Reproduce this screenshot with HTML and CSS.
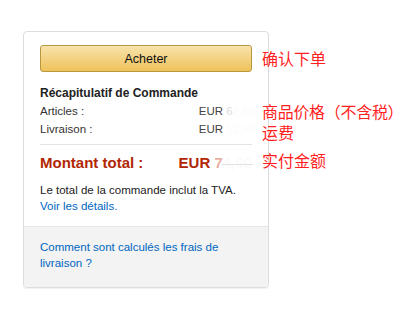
FILE: index.html
```html
<!DOCTYPE html>
<html lang="fr">
<head>
  <meta charset="UTF-8" />
  <meta name="viewport" content="width=device-width, initial-scale=1.0"/>
  <title>Récapitulatif de Commande</title>
  <link rel="stylesheet" href="styles.css">
</head>
<body>
  <div class="page">
    <div class="card">
      <div class="card-body">
        <button class="buy-btn">Acheter</button>
        <h2 class="summary-title">Récapitulatif de Commande</h2>
        <div class="row"><span>Articles :</span><span class="price">EUR <span class="fade">6</span><span class="gone">2,60</span></span></div>
        <div class="row"><span>Livraison :</span><span class="price">EUR <span class="gone">12,60</span></span></div>
        <div class="total-row"><span>Montant total :</span><span class="total-price">EUR <span class="fade-red">7</span><span class="gone">4,60</span></span></div>
        <p class="vat">Le total de la commande inclut la TVA.<br><a href="#">Voir les détails.</a></p>
      </div>
      <div class="card-foot">
        <a href="#">Comment sont calculés les frais de<br>livraison ?</a>
      </div>
    </div>

    <div class="note note-buy">确认下单</div>
    <div class="note note-items">商品价格（不含税）</div>
    <div class="note note-ship">运费</div>
    <div class="note note-total">实付金额</div>
    <div class="arrow"></div>
  </div>
</body>
</html>
```

FILE: styles.css
```css
body { margin: 0; font-family: "Liberation Sans", Arial, sans-serif; background: #fff; color: #111; }
.page { position: relative; width: 403px; height: 317px; padding: 31px 0 0 23px; box-sizing: border-box; }

.card { width: 246px; border: 1px solid #ddd; border-radius: 4px; box-sizing: border-box; overflow: hidden; box-shadow: 0 1px 1px rgba(0,0,0,0.06); }
.card-body { padding: 13px 16px 12px; }

.buy-btn { display: block; width: 100%; height: 27px; border: 1px solid #b9993e; border-radius: 3px; background: linear-gradient(#f8e3ad, #eec25a); font-family: inherit; font-size: 12.5px; color: #111; padding: 0; }

.summary-title { margin: 12px 0 0; font-size: 12px; line-height: 18px; font-weight: bold; color: #222; }
.row { display: flex; justify-content: space-between; font-size: 11.5px; line-height: 18px; color: #333; }
.price { white-space: nowrap; color: #444; margin-right: -3px; }
.fade { color: #ddd; }
.gone { color: #fbfbfb; }

.total-row { display: flex; justify-content: space-between; margin-top: 6px; padding-top: 8px; border-top: 1px solid #e4e4e4; font-size: 15px; line-height: 20px; font-weight: bold; color: #b12704; }
.total-price { white-space: nowrap; }
.fade-red { color: #e8b0a4; }

.vat { margin: 9px 0 0; font-size: 11.5px; line-height: 16px; color: #222; }
.vat a, .card-foot a { color: #0066c0; text-decoration: none; }

.card-foot { background: #f3f3f3; border-top: 1px solid #e7e7e7; padding: 12px 16px 16px; font-size: 11.5px; line-height: 16px; }

.note { position: absolute; left: 262px; font-family: "Noto Sans CJK SC", sans-serif; font-size: 16px; line-height: 16px; color: #ff1f1f; white-space: nowrap; }
.note-buy { top: 50px; }
.note-items { top: 103px; letter-spacing: -0.3px; }
.note-ship { top: 124px; }
.note-total { top: 152px; }
.arrow { position: absolute; left: 222px; top: 164px; width: 31px; height: 1px; background: #e2e2e2; }
```
